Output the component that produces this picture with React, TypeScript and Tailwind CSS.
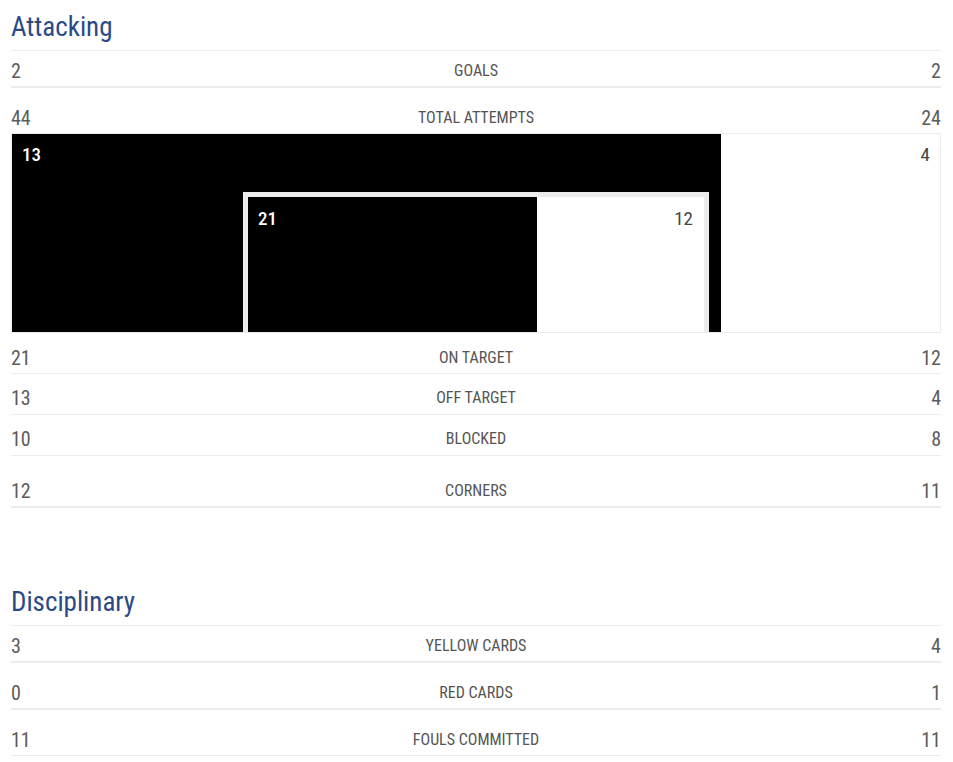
import React from 'react';

const font = { fontFamily: '"Roboto Condensed", "Liberation Sans Narrow", Roboto, sans-serif' };

type Row = { home: number; label: string; away: number; h: string; b: string };

const StatRow: React.FC<{ row: Row }> = ({ row }) => (
  <div className={`flex items-center justify-between ${row.h} ${row.b} border-[#ececec]`}>
    <span className="text-[20px] text-[#5c5c5c] w-16">{row.home}</span>
    <span className="text-[16px] text-[#555] uppercase">{row.label}</span>
    <span className="text-[20px] text-[#5c5c5c] w-16 text-right">{row.away}</span>
  </div>
);

const attacking: Row[] = [
  { home: 21, label: 'On target', away: 12, h: 'h-[41px] pt-[9px]', b: 'border-b' },
  { home: 13, label: 'Off target', away: 4, h: 'h-[41px] pt-[8px]', b: 'border-b' },
  { home: 10, label: 'Blocked', away: 8, h: 'h-[41px] pt-[8px]', b: 'border-b' },
  { home: 12, label: 'Corners', away: 11, h: 'h-[52px] pt-[19px]', b: 'border-b-2' },
];

const disciplinary: Row[] = [
  { home: 3, label: 'Yellow cards', away: 4, h: 'h-[37px] pt-[4px]', b: 'border-b-2' },
  { home: 0, label: 'Red cards', away: 1, h: 'h-[47px] pt-[14px]', b: 'border-b-2' },
  { home: 11, label: 'Fouls committed', away: 11, h: 'h-[46px] pt-[14px]', b: 'border-b' },
];

export default function App() {
  return (
    <div className="bg-white min-h-screen pl-[11px] pr-[12px] pt-[12px]" style={font}>
      <h2 className="text-[27px] leading-[30px] text-[#2a4a86] h-[38px]">Attacking</h2>
      <div className="border-t border-[#ececec]">
        <StatRow row={{ home: 2, label: 'Goals', away: 2, h: 'h-[37px] pt-[4px]', b: 'border-b-2' }} />
        <div className="flex items-center justify-between h-[45px] pt-[14px]">
          <span className="text-[20px] text-[#5c5c5c]">44</span>
          <span className="text-[16px] text-[#555] uppercase">Total attempts</span>
          <span className="text-[20px] text-[#5c5c5c]">24</span>
        </div>

        {/* shot chart */}
        <div className="border border-[#ececec] h-[200px] flex">
          <div className="bg-black w-[709px] h-full flex flex-col">
            <div className="text-white font-medium text-[19px] pl-[10px] pt-[7px] h-[58px]">13</div>
            <div className="flex-1 flex">
              <div className="w-[231px]" />
              <div className="w-[466px] bg-white border-[5px] border-b-0 border-[#ececec] flex">
                <div className="bg-black w-[289px] text-white font-medium text-[19px] pl-[10px] pt-[8px]">21</div>
                <div className="flex-1 text-[#444] text-[19px] text-right pr-[11px] pt-[8px]">12</div>
              </div>
            </div>
          </div>
          <div className="flex-1 text-[#444] text-[19px] text-right pr-[10px] pt-[7px]">4</div>
        </div>

        {attacking.map(r => <StatRow key={r.label} row={r} />)}
      </div>

      <h2 className="text-[27px] leading-[30px] text-[#2a4a86] mt-[79px] h-[38px]">Disciplinary</h2>
      <div className="border-t border-[#ececec]">
        {disciplinary.map(r => <StatRow key={r.label} row={r} />)}
      </div>
    </div>
  );
}
